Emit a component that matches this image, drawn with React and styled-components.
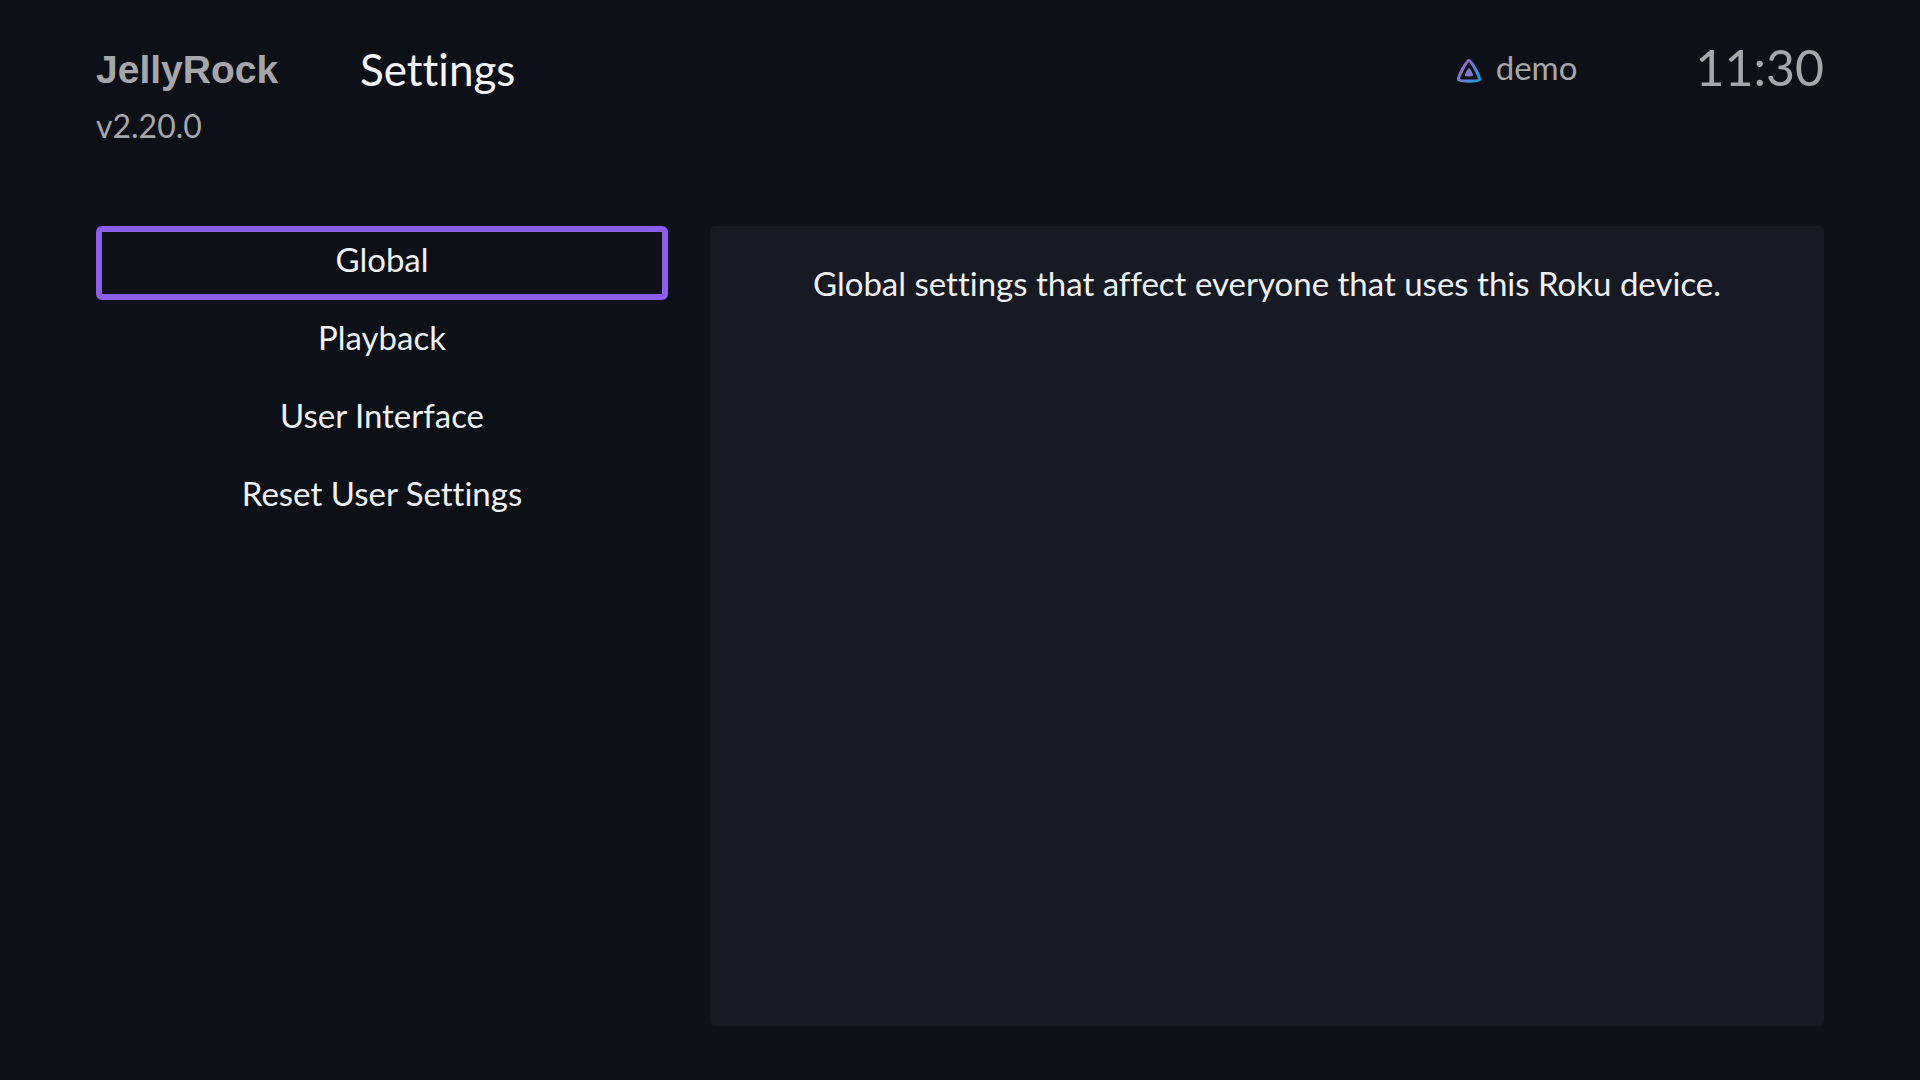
import React, { useState } from "react";
import styled, { createGlobalStyle } from "styled-components";

const menuItems = [
  {
    label: "Global",
    description: "Global settings that affect everyone that uses this Roku device.",
  },
  { label: "Playback", description: "Settings relating to playback." },
  { label: "User Interface", description: "Settings relating to the user interface." },
  { label: "Reset User Settings", description: "Restore the default user settings." },
];

function ServerLogo() {
  return (
    <svg width="26" height="30" viewBox="0 -3 26 30" aria-hidden="true">
      <defs>
        <linearGradient id="logoFill" x1="4" y1="9" x2="24" y2="21" gradientUnits="userSpaceOnUse">
          <stop offset="0" stopColor="#a565c6" />
          <stop offset="1" stopColor="#1c9bd6" />
        </linearGradient>
      </defs>
      <path
        d="M13 3.5C15.4 3.5 24.4 20.4 23.4 22.6C22.4 24.6 3.6 24.6 2.6 22.6C1.6 20.4 10.6 3.5 13 3.5Z"
        fill="none"
        stroke="url(#logoFill)"
        strokeWidth="3.2"
      />
      <path
        d="M13 11.2C14.2 11.2 17.6 17.6 17 18.7C16.4 19.7 9.6 19.7 9 18.7C8.4 17.6 11.8 11.2 13 11.2Z"
        fill="#8078cc"
      />
    </svg>
  );
}

export default function App() {
  const [selected, setSelected] = useState(0);

  return (
    <Page>
      <GlobalStyle />
      <Header>
        <Brand>
          <BrandName>JellyRock</BrandName>
          <Version>v2.20.0</Version>
        </Brand>
        <Title>Settings</Title>
        <User>
          <ServerLogo />
          <span>demo</span>
        </User>
        <Clock>11:30</Clock>
      </Header>
      <Content>
        <Menu>
          {menuItems.map((item, index) => (
            <MenuButton
              type="button"
              key={item.label}
              $selected={index === selected}
              onClick={() => setSelected(index)}
            >
              {item.label}
            </MenuButton>
          ))}
        </Menu>
        <Detail>{menuItems[selected].description}</Detail>
      </Content>
    </Page>
  );
}

const GlobalStyle = createGlobalStyle`
  * {
    box-sizing: border-box;
  }

  body {
    margin: 0;
    background: #0d1017;
    color: #eef0f4;
    font-family: Lato, "Noto Sans", sans-serif;
    font-size: 33px;
    font-variant-ligatures: none;
    line-height: 40px;
  }
`;

const Page = styled.div`
  display: flex;
  flex-direction: column;
  min-height: 100vh;
  padding: 44px 96px 54px;
`;

const Header = styled.header`
  display: flex;
  align-items: flex-start;
  height: 182px;
  color: #a6a7aa;
`;

const Brand = styled.div`
  display: flex;
  flex-direction: column;
  gap: 10px;
  width: 264px;
`;

const BrandName = styled.div`
  font-family: "Liberation Sans", sans-serif;
  font-size: 39px;
  font-weight: 700;
  line-height: 52px;
`;

const Version = styled.div`
  font-size: 32px;
`;

const Title = styled.h1`
  margin: 0;
  color: #f4f5f8;
  font-size: 44px;
  font-weight: 400;
  line-height: 50px;
`;

const User = styled.div`
  display: flex;
  align-items: center;
  gap: 14px;
  margin-left: auto;
  line-height: 46px;

  svg {
    margin-top: 4px;
  }
`;

const Clock = styled.time`
  margin-left: 118px;
  font-size: 50px;
  line-height: 46px;
`;

const Content = styled.main`
  display: grid;
  flex: 1;
  grid-template-columns: 572px 1fr;
  gap: 42px;
`;

const Menu = styled.nav`
  display: flex;
  flex-direction: column;
  gap: 4px;
`;

const MenuButton = styled.button`
  height: 74px;
  padding: 0 0 8px;
  border: 6px solid ${(props) => (props.$selected ? "#8b5fe9" : "transparent")};
  border-radius: 6px;
  outline: none;
  background: transparent;
  color: inherit;
  font: inherit;
  font-variant-ligatures: none;
  cursor: pointer;
`;

const Detail = styled.section`
  padding: 37px;
  border-radius: 5px;
  background: #171a22;
  text-align: center;
`;
